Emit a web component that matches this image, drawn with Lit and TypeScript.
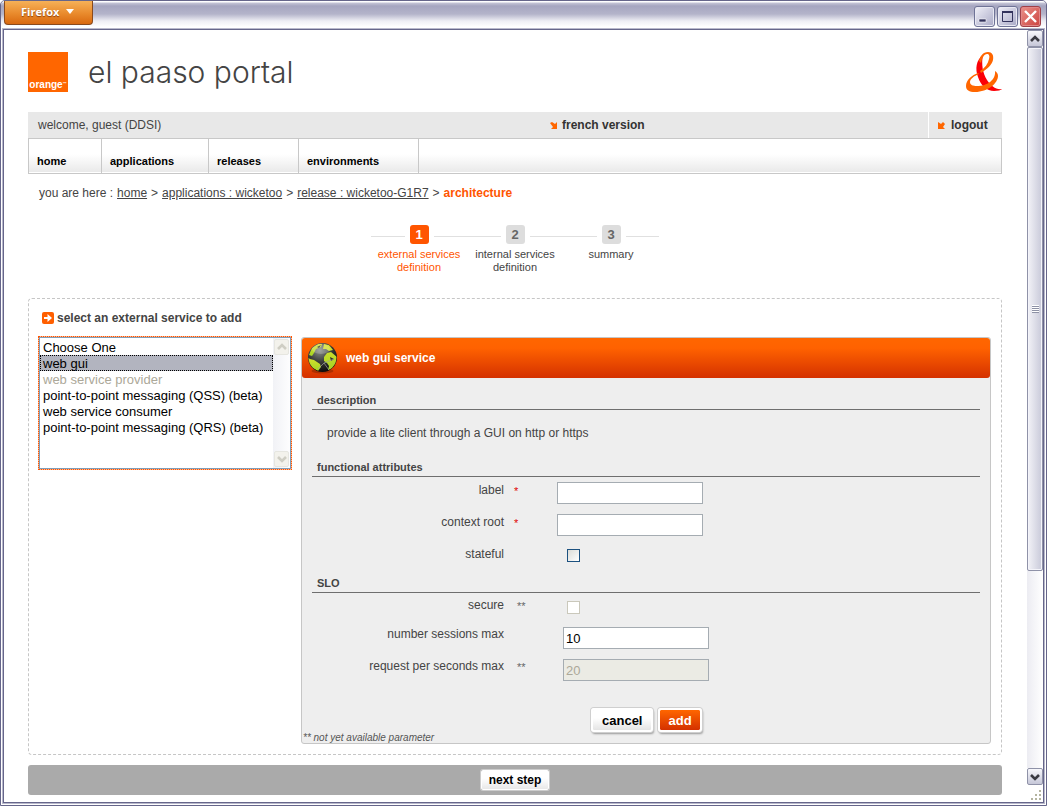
import { LitElement, html, css, svg } from "lit";
import { customElement } from "lit/decorators.js";

const chevron = (up: boolean, color: string) => svg`
  <svg width="10" height="8" viewBox="0 0 10 8" aria-hidden="true">
    <path d=${up ? "M1 6 5 2 9 6" : "M1 2 5 6 9 2"} fill="none" stroke=${color} stroke-width="2.6"/>
  </svg>`;

@customElement("title-bar")
class TitleBar extends LitElement {
  static styles = css`
    :host { display: block; }
    .bar {
      display: flex; justify-content: space-between; align-items: flex-start;
      height: 27px; padding: 0 5px 0 3px; border-bottom: 1px solid #a9a9bd;
      background: linear-gradient(#fff 0, #fff 1px, #c4c4d6 2px, #a6a6c0 5px, #b4b4ca 13px, #eeeef4 20px, #fff 26px);
    }
    .menu {
      display: flex; align-items: center; gap: 7px; box-sizing: border-box; width: 89px; height: 24px;
      padding: 0 0 2px 16px; border: 1px solid #8a4a1c; border-top: 0; border-radius: 0 0 4px 4px;
      background: linear-gradient(#f6b158, #e98a2c 55%, #d9690f); color: #fff;
      font: bold 11px "Open Sans", Verdana, sans-serif; text-shadow: 0 1px 1px #8a4010;
    }
    .controls { display: flex; gap: 2px; padding-top: 5px; }
    .control {
      display: block; box-sizing: border-box; width: 21px; height: 21px; padding: 0;
      border: 1px solid #6f7396; border-radius: 3px; box-shadow: inset 0 0 0 1px #e8e8f2;
      background: linear-gradient(135deg, #f0f0f8, #a9a9c6);
    }
    .close { background: linear-gradient(135deg, #ea9088, #cc4340); border-color: #a04048; box-shadow: inset 0 0 0 1px #e08888; }
    .control svg { display: block; }
  `;
  render() {
    return html`<div class="bar">
      <button class="menu" type="button">Firefox
        <svg width="8" height="5" viewBox="0 0 8 5" aria-hidden="true"><path d="M0 0h8L4 5z" fill="#fff"/></svg>
      </button>
      <div class="controls">
        <button class="control" type="button" aria-label="Minimize"><svg width="19" height="19" viewBox="0 0 19 19"><path d="M4 12h7v3H4z" fill="#33335c" stroke="#fff" stroke-width=".6"/></svg></button>
        <button class="control" type="button" aria-label="Maximize"><svg width="19" height="19" viewBox="0 0 19 19"><path d="M4.500 5v9.500h10V5z" fill="none" stroke="#33335c"/><path d="M4 5h11" stroke="#33335c" stroke-width="2"/></svg></button>
        <button class="control close" type="button" aria-label="Close"><svg width="19" height="19" viewBox="0 0 19 19"><path d="M4 4 15 15M15 4 4 15" stroke="#fff" stroke-width="2.400"/></svg></button>
      </div>
    </div>`;
  }
}

@customElement("page-scrollbar")
class PageScrollbar extends LitElement {
  static styles = css`
    :host { display: flex; }
    .column { display: flex; flex-direction: column; width: 16px; background: #fff; }
    .track { flex: 1; display: flex; flex-direction: column; background: linear-gradient(90deg, #ececf2, #fff); }
    .end {
      display: flex; align-items: center; justify-content: center; box-sizing: border-box;
      width: 16px; height: 17px; padding: 0; border: 1px solid #8f92a8; border-radius: 2px;
      background: linear-gradient(#f8f8fc, #c6c7d8);
    }
    .thumb {
      flex: 523 1 0; display: flex; align-items: center; justify-content: center; box-sizing: border-box;
      border: 1px solid #8f92a8; border-radius: 2px; box-shadow: inset 0 0 0 1px #f4f4fa;
      background: linear-gradient(90deg, #f2f2f7, #c8c9d9);
    }
    .rest { flex: 197 1 0; }
    .grip { width: 7px; height: 8px; background: repeating-linear-gradient(#fff 0 1px, #8d91a5 1px 2px); }
    .resize { display: flex; height: 17px; align-items: flex-end; justify-content: flex-end; }
  `;
  render() {
    return html`<div class="column" aria-hidden="true">
      <div class="end">${chevron(true, "#3a3a42")}</div>
      <div class="track"><div class="thumb"><div class="grip"></div></div><div class="rest"></div></div>
      <div class="end">${chevron(false, "#3a3a42")}</div>
      <div class="resize"><svg width="13" height="13" viewBox="0 0 13 13" fill="#b4b4a0">
        <path d="M9 1h2v2H9zM5 5h2v2H5zM9 5h2v2H9zM1 9h2v2H1zM5 9h2v2H5zM9 9h2v2H9z"/></svg></div>
    </div>`;
  }
}

@customElement("step-list")
class StepList extends LitElement {
  static styles = css`
    :host { display: block; }
    .steps { display: flex; justify-content: center; margin: 0; padding: 0; list-style: none; }
    .step { width: 96px; font-size: 11px; line-height: 13px; text-align: center; color: #444; }
    .rail { display: flex; align-items: center; gap: 5px; margin-bottom: 4px; }
    .rail::before, .rail::after { content: ""; flex: 1; height: 1px; margin-top: 4px; background: #e0e0e0; }
    .number {
      width: 19px; height: 19px; border-radius: 3px; background: #ddd; color: #666;
      font-size: 13px; font-weight: bold; line-height: 19px;
    }
    .active { color: #ff5500; }
    .active .number { background: #ff5500; color: #fff; }
    .text { padding: 0 4px; }
  `;
  render() {
    const steps = ["external services definition", "internal services definition", "summary"];
    return html`<ol class="steps">${steps.map((s, i) => html`
      <li class="step ${i === 0 ? "active" : ""}"><div class="rail"><span class="number">${i + 1}</span></div><div class="text">${s}</div></li>`)}
    </ol>`;
  }
}

@customElement("service-list")
class ServiceList extends LitElement {
  static styles = css`
    :host { display: block; }
    .title { display: flex; align-items: center; gap: 3px; margin: 0 0 10px 4px; font-size: 12px; font-weight: bold; line-height: 16px; color: #444; }
    .frame { display: flex; border: 1px dotted #ff5500; background: #ffb48c; }
    .inner { display: flex; flex: 1; min-width: 0; border: 1px solid #7f9db9; background: #fff; }
    .list {
      flex: 1; min-width: 0; height: 130px; padding: 1px 0; border: 0; outline: 0; overflow: hidden; background: #fff;
      font: 13px "Liberation Sans", Arial, sans-serif; color: #000; border-radius: 0;
    }
    .option { min-height: 16px; padding: 1px 3px 0; box-sizing: border-box; height: 16px; line-height: 16px; color: #000; }
    .option:checked { background: #b2b4bf linear-gradient(#b2b4bf, #b2b4bf); color: #000; outline: 1px dotted #000; outline-offset: -1px; }
    .option:disabled { color: #aca899; }
    .scroll { display: flex; flex-direction: column; justify-content: space-between; width: 17px; background: linear-gradient(90deg, #f1f2f6, #fdfdfe); }
    .arrow { display: flex; align-items: center; justify-content: center; width: 13px; height: 14px; margin: 1px; border: 1px solid #e6e6e0; border-radius: 2px; background: #f3f2ec; }
  `;
  render() {
    return html`
      <label class="title" for="services">
        <svg width="12" height="12" viewBox="0 0 12 12" aria-hidden="true"><rect width="12" height="12" rx="2" fill="#ff5f00"/><path d="M2 5h3.500V2L10 6 5.500 10V7H2z" fill="#fff"/></svg>
        select an external service to add
      </label>
      <div class="frame"><div class="inner">
        <select class="list" id="services" size="8">
          <option class="option">Choose One</option>
          <option class="option" selected>web gui</option>
          <option class="option" disabled>web service provider</option>
          <option class="option">point-to-point messaging (QSS) (beta)</option>
          <option class="option">web service consumer</option>
          <option class="option">point-to-point messaging (QRS) (beta)</option>
        </select>
        <div class="scroll" aria-hidden="true"><span class="arrow">${chevron(true, "#cfcec4")}</span><span class="arrow">${chevron(false, "#cfcec4")}</span></div>
      </div></div>`;
  }
}

@customElement("service-form")
class ServiceForm extends LitElement {
  static styles = css`
    :host { display: block; }
    .panel { border: 1px solid #c6c6c6; border-radius: 3px; background: #eee; color: #444; font-size: 12px; }
    .head {
      display: flex; align-items: center; gap: 8px; height: 40px; padding: 0 5px; border-radius: 3px;
      background: linear-gradient(#ff6600, #ff6200 25%, #d43100); color: #fff;
    }
    .name { margin: 0; font-size: 12px; line-height: 16px; }
    .body { padding: 15px 10px 0; }
    .section { margin: 0; padding: 0 5px 1px; border-bottom: 1px solid #6e6e6e; font-size: 11px; line-height: 15px; color: #444; }
    .about { margin: 0 0 18px; padding: 15px 15px 0; line-height: 17px; }
    .fields { display: grid; grid-template-columns: 192px 53px 1fr; grid-auto-rows: 32px; padding-top: 5px; }
    .features { grid-template-rows: 32px 32px 30px; }
    .slo { grid-template-columns: 192px 59px 1fr; grid-template-rows: 29px; margin-bottom: 17px; }
    .label { text-align: right; line-height: 17px; }
    .slo .label { line-height: 15px; }
    .mark { padding-left: 10px; line-height: 19px; font-size: 11px; color: #e00000; }
    .slo .mark { padding-left: 13px; line-height: 17px; color: #666; }
    .text {
      box-sizing: border-box; width: 146px; height: 22px; padding: 0 2px; border: 1px solid #a5acb2; border-radius: 0;
      background: #fff; color: #000; font: 13px "Liberation Sans", Arial, sans-serif;
    }
    .text:disabled { background: #ebebe4; color: #aca899; }
    .check {
      appearance: none; box-sizing: border-box; width: 13px; height: 13px; margin: 3px 0 0 10px;
      border: 1px solid #1c5180; background: linear-gradient(135deg, #dcdcd7, #fff);
    }
    .slo .check { margin-left: 4px; }
    .check:disabled { border-color: #cac8bb; background: #fff; }
    .actions { display: flex; gap: 5px; padding-left: 279px; }
    .button {
      box-sizing: border-box; height: 24px; padding: 0 9px; border: 2px solid #fff; border-radius: 3px;
      outline: 0; box-shadow: 0 0 0 1px #cfcfcf, 1px 2px 2px #999; background: linear-gradient(#fff 40%, #e4e4e4) padding-box;
      color: #000; font: bold 13px "Liberation Sans", Arial, sans-serif;
    }
    .button.primary { padding: 0 8px; background: linear-gradient(#ff6600, #d43100) padding-box; color: #fff; }
    .note { margin: 0; font-size: 10px; line-height: 11px; font-style: italic; color: #555; padding-left: 1px; }
  `;
  render() {
    return html`<form class="panel">
      <div class="head">
        <svg width="31" height="32" viewBox="0 0 31 32" aria-hidden="true">
          <defs>
            <radialGradient id="sea" cx=".4" cy=".25" r=".8"><stop offset="0" stop-color="#8b8f8a"/><stop offset=".5" stop-color="#3a3c3a"/><stop offset="1" stop-color="#050505"/></radialGradient>
            <linearGradient id="land" x1="0" y1="0" x2="0" y2="1"><stop offset="0" stop-color="#d9e02e"/><stop offset="1" stop-color="#a4d424"/></linearGradient>
            <clipPath id="ball"><circle cx="15.500" cy="15.500" r="14"/></clipPath>
          </defs>
          <ellipse cx="15.500" cy="29" rx="11" ry="2.500" fill="#7d2200" opacity=".5"/>
          <circle cx="15.500" cy="15.500" r="14.500" fill="url(#sea)"/>
          <g clip-path="url(#ball)">
            <path d="M2 13 5 6l6-4 4 0-1 3-5 2-2 4-2 3z" fill="url(#land)"/>
            <path d="m0 15 3 2 4 1 6 4 1 3-3 4-7-4-4-6z" fill="url(#land)"/>
            <path d="m17 2 5 1 4 5-4 1-3-2-3 0zM20 11l4-1 6 5-1 7-4 5-4 1 1-4-2-3-3-2 0-4z" fill="url(#land)"/>
            <path d="m10 5 4-2-2 3zM23 15l4 2-3 2z" fill="#2c2e2c"/>
            <path d="M11 27 17 21 27 17M17 21 22 28" fill="none" stroke="#a0a49c" stroke-width=".7"/>
            <ellipse cx="14" cy="7" rx="9" ry="5" fill="#fff" opacity=".2"/>
          </g>
        </svg>
        <h2 class="name">web gui service</h2>
      </div>
      <div class="body">
        <h3 class="section">description</h3>
        <p class="about">provide a lite client through a GUI on http or https</p>
        <h3 class="section">functional attributes</h3>
        <div class="fields features">
          <label class="label" for="label">label</label><span class="mark">*</span><div><input class="text" id="label" type="text"></div>
          <label class="label" for="root">context root</label><span class="mark">*</span><div><input class="text" id="root" type="text"></div>
          <label class="label" for="stateful">stateful</label><span class="mark"></span><div><input class="check" id="stateful" type="checkbox"></div>
        </div>
        <h3 class="section">SLO</h3>
        <div class="fields slo">
          <label class="label" for="secure">secure</label><span class="mark">**</span><div><input class="check" id="secure" type="checkbox" disabled></div>
          <label class="label" for="sessions">number sessions max</label><span class="mark"></span><div><input class="text" id="sessions" type="text" value="10"></div>
          <label class="label" for="requests">request per seconds max</label><span class="mark">**</span><div><input class="text" id="requests" type="text" value="20" disabled></div>
        </div>
        <div class="actions"><button class="button" type="button">cancel</button><button class="button primary" type="button">add</button></div>
      </div>
      <p class="note">** not yet available parameter</p>
    </form>`;
  }
}

@customElement("app-root")
class AppRoot extends LitElement {
  static styles = css`
    :host { display: block; font-family: "Liberation Sans", Arial, sans-serif; color: #444; font-size: 12px; }
    .window {
      display: flex; flex-direction: column; box-sizing: border-box; min-height: 100vh;
      border: 1px solid #66668a; border-radius: 5px 5px 0 0; background: #b9b9cc; overflow: hidden;
    }
    .shell { flex: 1; display: flex; margin: 0 2px 2px; border: 1px solid #66668a; background: #fff; box-shadow: 0 0 0 1px #b9b9cc, 0 0 0 2px #fff; }
    .page { flex: 1; min-width: 0; padding: 22px 25px 7px 24px; }
    .header { display: flex; align-items: center; gap: 20px; height: 40px; margin-bottom: 20px; }
    .logo { display: flex; align-items: flex-end; justify-content: center; width: 40px; height: 40px; background: #ff6600; color: #fff; font-size: 10px; font-weight: bold; line-height: 14px; }
    .tm { font-size: 4px; line-height: 16px; }
    .title { flex: 1; margin: 0; font: 300 30px "Inter", "Liberation Sans", sans-serif; line-height: 44px; color: #444; }
    .user { display: grid; grid-template-columns: 522fr 378fr 74px; height: 26px; line-height: 26px; background: #e8e8e8; }
    .welcome { padding-left: 10px; }
    .link { display: flex; align-items: center; gap: 5px; color: #333; font-weight: bold; text-decoration: none; }
    .logout { padding-left: 9px; border-left: 1px solid #fff; gap: 6px; }
    .nav { display: grid; grid-template-columns: 73px 107px 90px 120px; height: 34px; border: 1px solid #c8c8c8; background: linear-gradient(#fff 45%, #e8e8e8); box-shadow: inset 0 -1px #fff; }
    .tab { padding: 14px 0 0 8px; border-right: 1px solid #c8c8c8; color: #000; font-size: 11px; font-weight: bold; line-height: 16px; text-decoration: none; }
    .crumbs { display: flex; gap: 4px; margin: 11px 0 23px; padding-left: 11px; line-height: 17px; }
    .crumb { color: #444; }
    .here { color: #ff5500; font-weight: bold; }
    .work { display: flex; align-items: flex-start; gap: 9px; margin-top: 24px; padding: 11px 10px 10px 9px; border: 1px dashed #c6c6c6; border-radius: 4px; }
    .services { flex: 0 0 254px; }
    .form { flex: 1; min-width: 0; margin-top: 27px; }
    .footer { display: flex; align-items: center; justify-content: center; height: 30px; margin-top: 10px; border-radius: 3px; background: #aaa; }
    .next {
      box-sizing: border-box; height: 20px; padding: 0 7px; border: 1px solid #fff; border-radius: 2px;
      background: linear-gradient(#fff 40%, #e8e8e8); color: #000; font: bold 12px "Liberation Sans", Arial, sans-serif;
      box-shadow: 0 0 0 1px #ccc;
    }
  `;
  render() {
    return html`<div class="window">
      <title-bar></title-bar>
      <div class="shell">
        <main class="page">
          <header class="header">
            <div class="logo">orange<span class="tm">™</span></div>
            <h1 class="title">el paaso portal</h1>
            <svg width="36" height="40" viewBox="0 0 36 40" role="img" aria-label="Ampersand">
              <path d="M17 3C10 8 9 17 12 25c3 9 9 14 16 14 4 0 7-1 8-2-6 1-11-3-15-9C17 22 15 12 17 3z" fill="#fb0007"/>
              <path fill-rule="evenodd" d="M22 0c4 0 6 3 5 8-1 5-6 9-12 13l-1-2c5-3 8-7 9-12 1-3 0-5-2-5-3 0-5 4-6 9l-2-2C14 4 17 0 22 0z" fill="#ff6600"/>
              <path d="M12 21C6 23 0 28 0 34c0 4 3 6 9 6 13 0 23-9 23-16 0-2-1-4-3-5 1 9-8 15-18 15-4 0-7-1-7-4s4-6 9-8z" fill="#ff6600"/>
            </svg>
          </header>
          <div class="user">
            <span class="welcome">welcome, guest (DDSI)</span>
            <a class="link" href="#"><svg width="7" height="7" viewBox="0 0 7 7"><path d="M0 1 2 0l3 2 2-2v7H1l2-2z" fill="#ff6600"/></svg>french version</a>
            <a class="link logout" href="#"><svg width="7" height="7" viewBox="0 0 7 7"><path d="M7 2 5 0 3 2 0 0v7h7L5 5z" fill="#ff6600"/></svg>logout</a>
          </div>
          <nav class="nav">
            <a class="tab" href="#">home</a><a class="tab" href="#">applications</a><a class="tab" href="#">releases</a><a class="tab" href="#">environments</a>
          </nav>
          <div class="crumbs"><span>you are here :</span><a class="crumb" href="#">home</a><span>&gt;</span><a class="crumb" href="#">applications : wicketoo</a><span>&gt;</span><a class="crumb" href="#">release : wicketoo-G1R7</a><span>&gt;</span><span class="here">architecture</span></div>
          <step-list></step-list>
          <section class="work">
            <service-list class="services"></service-list>
            <service-form class="form"></service-form>
          </section>
          <footer class="footer"><button class="next" type="button">next step</button></footer>
        </main>
        <page-scrollbar></page-scrollbar>
      </div>
    </div>`;
  }
}
